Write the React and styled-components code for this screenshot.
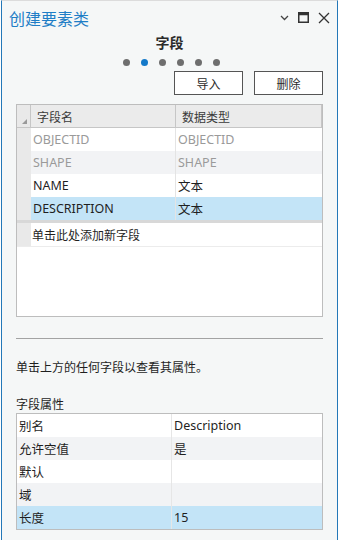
import React from "react";
import styled, { createGlobalStyle } from "styled-components";

const GlobalStyle = createGlobalStyle`
  html, body {
    margin: 0;
    padding: 0;
    background: #ffffff;
  }
  body {
    font-family: "Noto Sans", "Noto Sans CJK SC", sans-serif;
    color: #1f1f1f;
  }
`;

const fields = [
  { name: "OBJECTID", type: "OBJECTID", locked: true },
  { name: "SHAPE", type: "SHAPE", locked: true },
  { name: "NAME", type: "文本" },
  { name: "DESCRIPTION", type: "文本", selected: true },
];

const props = [
  { label: "别名", value: "Description" },
  { label: "允许空值", value: "是" },
  { label: "默认", value: "" },
  { label: "域", value: "" },
  { label: "长度", value: "15", selected: true },
];

const App = () => {
  return (
    <>
      <GlobalStyle />
      <Pane>
        <TitleBar>
          <Title>创建要素类</Title>
          <WindowIcons>
            <svg width="9" height="6" viewBox="0 0 9 6">
              <path d="M1 1 L4.5 4.5 L8 1" fill="none" stroke="#444" strokeWidth="1.3" />
            </svg>
            <svg width="11" height="11" viewBox="0 0 11 11">
              <rect x="0.75" y="0.75" width="9.5" height="9.5" fill="none" stroke="#333" strokeWidth="1.5" />
              <rect x="0.75" y="0.75" width="9.5" height="2.5" fill="#333" />
            </svg>
            <svg width="12" height="12" viewBox="0 0 12 12">
              <path d="M1 1 L11 11 M11 1 L1 11" stroke="#333" strokeWidth="1.3" />
            </svg>
          </WindowIcons>
        </TitleBar>

        <StepTitle>字段</StepTitle>
        <Dots>
          {[0, 1, 2, 3, 4, 5].map((i) => (
            <Dot key={i} active={i === 1} />
          ))}
        </Dots>

        <ButtonRow>
          <Button>导入</Button>
          <Button>删除</Button>
        </ButtonRow>

        <Grid>
          <GridRow header>
            <Gutter header>
              <svg width="5" height="5" viewBox="0 0 5 5">
                <path d="M5 0 L5 5 L0 5 Z" fill="#9a9a9a" />
              </svg>
            </Gutter>
            <HeadCell wide>字段名</HeadCell>
            <HeadCell>数据类型</HeadCell>
          </GridRow>
          {fields.map((f, i) => (
            <GridRow key={f.name} alt={i % 2 === 1} selected={f.selected}>
              <Gutter />
              <Cell wide locked={f.locked}>{f.name}</Cell>
              <Cell locked={f.locked}>{f.type}</Cell>
            </GridRow>
          ))}
          <AddRow>
            <Gutter />
            <AddCell>单击此处添加新字段</AddCell>
          </AddRow>
        </Grid>

        <Rule />
        <Hint>单击上方的任何字段以查看其属性。</Hint>
        <SectionLabel>字段属性</SectionLabel>

        <PropTable>
          {props.map((p, i) => (
            <PropRow key={p.label} alt={i % 2 === 1} selected={p.selected}>
              <PropCell first>{p.label}</PropCell>
              <PropCell>{p.value}</PropCell>
            </PropRow>
          ))}
        </PropTable>
      </Pane>
    </>
  );
};

export default App;

const Pane = styled.div`
  box-sizing: border-box;
  width: 337px;
  height: 540px;
  margin-left: 1px;
  background: #f5f7f7;
  border-left: 1px solid #2478b8;
  border-right: 1px solid #2478b8;
  border-top: 1px solid #dcdcdc;
  display: flex;
  flex-direction: column;
  overflow: hidden;
`;

const TitleBar = styled.div`
  height: 34px;
  display: flex;
  align-items: center;
  justify-content: space-between;
  padding: 0 7px 0 7px;
`;

const Title = styled.div`
  font-family: "Noto Sans CJK SC", sans-serif;
  font-size: 16px;
  color: #1f7ec6;
`;

const WindowIcons = styled.div`
  display: flex;
  align-items: center;
  gap: 9px;
  margin-top: -1px;
`;

const StepTitle = styled.div`
  font-family: "Noto Sans CJK SC", sans-serif;
  font-size: 14px;
  font-weight: bold;
  text-align: center;
  color: #2b2b2b;
  margin-top: -1px;
  line-height: 16px;
`;

const Dots = styled.div`
  display: flex;
  justify-content: center;
  gap: 11px;
  margin-top: 9px;
  padding-left: 4px;
`;

const Dot = styled.span`
  width: 7px;
  height: 7px;
  border-radius: 50%;
  background: ${(p) => (p.active ? "#1479c9" : "#6e6e6e")};
`;

const ButtonRow = styled.div`
  display: flex;
  justify-content: flex-end;
  gap: 11px;
  padding-right: 14px;
  margin-top: 5px;
`;

const Button = styled.div`
  box-sizing: border-box;
  width: 69px;
  height: 24px;
  border: 1px solid #555;
  background: #fff;
  font-family: "Noto Sans CJK SC", sans-serif;
  font-size: 12px;
  color: #2b2b2b;
  display: flex;
  align-items: center;
  justify-content: center;
`;

const Grid = styled.div`
  box-sizing: border-box;
  margin: 9px 14px 0 14px;
  height: 213px;
  background: #fff;
  border: 1px solid #bdbdbd;
  font-size: 12px;
`;

const GridRow = styled.div`
  display: flex;
  height: ${(p) => (p.header ? "22px" : "23px")};
  background: ${(p) =>
    p.header ? "#ebebeb" : p.selected ? "#c3e4f7" : p.alt ? "#f2f3f5" : "#fff"};
  border-bottom: ${(p) => (p.header ? "1px solid #c6c6c6" : "none")};
`;

const Gutter = styled.div`
  width: 14px;
  flex: none;
  background: #e9e9e9;
  border-right: 1px solid ${(p) => (p.header ? "#c6c6c6" : "#e9e9e9")};
  display: flex;
  align-items: flex-end;
  justify-content: flex-end;
  padding: 0 3px 3px 0;
  box-sizing: border-box;
`;

const HeadCell = styled.div`
  box-sizing: border-box;
  width: ${(p) => (p.wide ? "145px" : "auto")};
  flex: ${(p) => (p.wide ? "none" : "1")};
  border-right: 1px solid #c6c6c6;
  padding-left: 6px;
  display: flex;
  align-items: center;
  font-family: "Noto Sans CJK SC", sans-serif;
  color: #3a3a3a;
`;

const Cell = styled.div`
  box-sizing: border-box;
  width: ${(p) => (p.wide ? "145px" : "auto")};
  flex: ${(p) => (p.wide ? "none" : "1")};
  border-right: 1px solid ${(p) => (p.wide ? "#e4e4e4" : "transparent")};
  padding-left: 2px;
  display: flex;
  align-items: center;
  font-family: "Noto Sans", "Noto Sans CJK SC", sans-serif;
  font-size: 12.5px;
  color: ${(p) => (p.locked ? "#9a9a9a" : "#1f1f1f")};
  margin-right: ${(p) => (p.wide ? "0" : "2px")};
`;

const AddRow = styled.div`
  display: flex;
  height: 23px;
  border-top: 3px solid #d8d8d8;
  border-bottom: 1px solid #ececec;
`;

const AddCell = styled.div`
  padding-left: 1px;
  display: flex;
  align-items: center;
  font-family: "Noto Sans CJK SC", sans-serif;
  color: #1f1f1f;
`;

const Rule = styled.div`
  margin: 21px 14px 0 14px;
  height: 1px;
  background: #a3a3a3;
`;

const Hint = styled.div`
  margin: 19px 0 0 14px;
  font-family: "Noto Sans CJK SC", sans-serif;
  font-size: 12px;
  line-height: 18px;
`;

const SectionLabel = styled.div`
  margin: 20px 0 0 14px;
  font-family: "Noto Sans CJK SC", sans-serif;
  font-size: 12px;
  line-height: 16px;
`;

const PropTable = styled.div`
  box-sizing: border-box;
  margin: 1px 14px 0 14px;
  border: 1px solid #bdbdbd;
  background: #fff;
  font-size: 12px;
`;

const PropRow = styled.div`
  display: flex;
  height: 23px;
  background: ${(p) => (p.selected ? "#c3e4f7" : p.alt ? "#f2f3f5" : "#fff")};
`;

const PropCell = styled.div`
  box-sizing: border-box;
  width: ${(p) => (p.first ? "155px" : "auto")};
  flex: ${(p) => (p.first ? "none" : "1")};
  border-right: ${(p) => (p.first ? "1px solid #e6e6e6" : "none")};
  padding-left: 2px;
  display: flex;
  align-items: center;
  font-family: "Noto Sans", "Noto Sans CJK SC", sans-serif;
  font-size: 12.5px;
`;
